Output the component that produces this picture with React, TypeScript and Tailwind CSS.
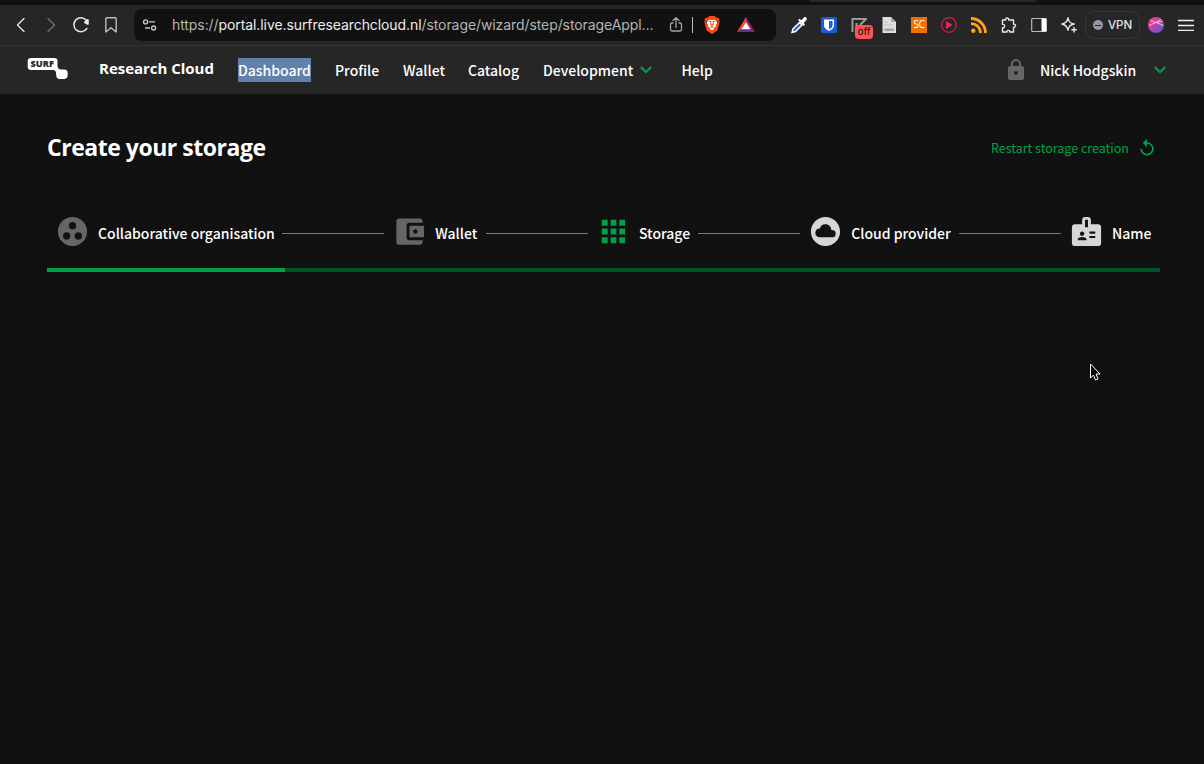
import React from "react";
import { MdGroupWork, MdAccountBalanceWallet, MdApps, MdCloudCircle, MdBadge, MdReplay, MdLock } from "react-icons/md";
import { SiBrave } from "react-icons/si";

const sans = "font-['Noto_Sans_CJK_JP',sans-serif] font-medium";

function Cell({ children }: { children: React.ReactNode }) {
  return <div className="flex h-8 w-[30px] shrink-0 items-center justify-center">{children}</div>;
}

function Stroke({ d, size = "size-5", color = "stroke-[#e6e6e6]" }: { d: string; size?: string; color?: string }) {
  return (
    <svg viewBox="0 0 20 20" className={`${size} ${color} shrink-0 fill-none stroke-[1.4]`} strokeLinecap="round" strokeLinejoin="round">
      <path d={d} />
    </svg>
  );
}

function Chevron() {
  return (
    <svg viewBox="0 0 12 8" className="h-2 w-3 shrink-0 fill-none stroke-[#00a14b] stroke-2">
      <path d="M.8 1 6 6.2 11.2 1" />
    </svg>
  );
}

function AddressBar() {
  return (
    <div className="flex h-8 w-[642px] shrink-0 items-center rounded-lg bg-[#111111] pl-1.5">
      <svg viewBox="0 0 20 20" className="size-5 shrink-0 fill-none stroke-[#c8c8c8] stroke-[1.4]">
        <circle cx="5.6" cy="6.9" r="2" />
        <path d="M9 6.9h6M5 13h5" />
        <circle cx="13.6" cy="13" r="2" />
      </svg>
      <span className="mb-0.5 ml-3 w-[482px] shrink-0 whitespace-nowrap font-['Inter',sans-serif] text-[14px] tracking-[-0.085px] text-[#b4b4b4]">
        https://<span className="text-[#ededed]">portal.live.surfresearchcloud.nl</span>/storage/wizard/step/storageAppl...
      </span>
      <svg viewBox="0 0 20 20" className="ml-3 size-5 shrink-0 fill-none stroke-[#a5a5a5] stroke-[1.3]" strokeLinecap="round" strokeLinejoin="round">
        <path d="M7 8H6a1.500 1.500 0 0 0-1.500 1.500v5A1.500 1.500 0 0 0 6 16h8a1.500 1.500 0 0 0 1.500-1.500v-5A1.500 1.500 0 0 0 14 8h-1M10 12.500V2.800M7 5.500l3-2.900 3 2.900" />
      </svg>
      <div className="ml-1.5 h-4 w-px shrink-0 bg-[#bdbdbd]" />
      <span className="relative ml-2.5 size-[18px] shrink-0">
        <svg viewBox="0 0 18 18" className="absolute inset-0 size-[18px] fill-white"><path d="M5 3.500h8l1.500 4-2 5L9 15.500l-3.500-3-2-5z" /></svg>
        <SiBrave className="absolute inset-0 size-[18px] text-[#ff4a0b]" />
      </span>
      <svg viewBox="0 0 20 18" className="ml-[15px] h-[18px] w-5 shrink-0">
        <path d="M10 1 1 16l4.500-2.500L10 6z" fill="#ff4a20" />
        <path d="m10 1 9 15-4.500-2.500L10 6z" fill="#9e1f63" />
        <path d="M1 16h18l-4.500-3h-9z" fill="#662d91" />
        <path d="m10 6 4.500 7.300h-9z" fill="#fff" />
      </svg>
    </div>
  );
}

function Extensions() {
  return (
    <div className="ml-2 flex items-center">
      <Cell>
        <svg viewBox="0 0 18 18" className="size-[18px]">
          <path d="M2 16.500 3 13l6.500-6.500 2.500 2.500-6.500 6.500z" fill="#3157c9" stroke="#fff" strokeWidth="1.500" />
          <path d="m8 4 1.500-1.200 1.700 1.500L14 1.500c1.500-1.300 3.700.8 2.500 2.500L13.700 7l1.300 1.500L13.800 10z" fill="#fff" />
        </svg>
      </Cell>
      <Cell>
        <svg viewBox="0 0 16 16" className="size-4">
          <rect width="16" height="16" rx="2" fill="#175ddc" />
          <path d="M3 2.500h10v5.700c0 3-2.600 4.700-5 5.800-2.400-1.100-5-2.800-5-5.800z" fill="#fff" />
          <path d="M8 4h3.500v4.200c0 1.900-1.700 3.200-3.500 4.100z" fill="#175ddc" />
        </svg>
      </Cell>
      <Cell>
        <div className="relative size-4">
          <svg viewBox="0 0 16 16" className="size-4 fill-none stroke-[#999999] stroke-2">
            <path d="M1.500 15V2H15L9 8M5.500 6v6" />
          </svg>
          <span className="absolute top-2 left-1 flex h-3.5 w-[18px] items-center justify-center rounded-[4px] bg-[#ff5650] pb-0.5 font-['Inter',sans-serif] text-[10px] font-medium text-[#222222]">off</span>
        </div>
      </Cell>
      <Cell>
        <svg viewBox="0 0 16 16" className="size-4">
          <path d="M1.500 0H10l5 5v11H1.500z" fill="#dedede" />
          <path d="M10 0v5h5z" fill="#a8a8a8" />
          <path d="M3 5h4M3 8h9" stroke="#c0c0c0" />
          <path d="M3.500 11.500H13V14H3.500z" fill="#a3a3a3" />
        </svg>
      </Cell>
      <Cell>
        <div className="flex size-4 items-center justify-center bg-[#ed7203] font-['Open_Sans',sans-serif] text-[10.500px] tracking-[-0.4px] text-white">SC</div>
      </Cell>
      <Cell>
        <svg viewBox="0 0 16 16" className="size-4">
          <circle cx="8" cy="8" r="7.300" fill="none" stroke="#c5214d" strokeWidth="1.300" />
          <path d="M5 4v8l6.500-4z" fill="#ed2553" />
        </svg>
      </Cell>
      <Cell>
        <svg viewBox="0 0 16 16" className="size-4 fill-none stroke-[#ffa31c] stroke-[2.8]">
          <circle cx="2.300" cy="13.700" r="2.200" className="fill-[#ffa31c] stroke-none" />
          <path d="M0 6.600A9.400 9.400 0 0 1 9.400 16M0 1.500A14.500 14.500 0 0 1 14.500 16" />
        </svg>
      </Cell>
      <Cell>
        <Stroke d="M3.500 5h3.200c-.8-2.700 3.800-2.700 3 0h4.800v4.200c2.700-.8 2.700 3.600 0 2.900V17h-3.800c.5-2.200-3.200-2.200-2.700 0H3.500v-4.200c2.800.6 2.800-4 0-3.400z" />
      </Cell>
      <Cell>
        <svg viewBox="0 0 16 16" className="size-4">
          <rect x=".7" y="1.500" width="14.500" height="13" rx="1" fill="none" stroke="#b8b8bc" strokeWidth="1.200" />
          <path d="M10.500 1.500h5v13h-5z" fill="#fff" />
        </svg>
      </Cell>
      <Cell>
        <Stroke d="M9 2.800c.7 4 2 5.500 6.200 6.200-4.200.8-5.500 2.200-6.200 6.200-.8-4-2.200-5.400-6.200-6.200C6.800 8.300 8.200 6.800 9 2.800zM15 12.500v4.500M12.800 14.700h4.500" />
      </Cell>
      <div className="ml-px flex h-7 w-[55px] items-center justify-center gap-[5px] rounded-[9px] border border-[#363636] font-['Inter',sans-serif] text-[11.500px] font-medium text-[#e3e3e3]">
        <span className="flex size-2.5 items-center justify-center rounded-full bg-[#9296a5]"><span className="h-px w-1.5 bg-[#262626]" /></span>
        <span className="mt-px">VPN</span>
      </div>
      <svg viewBox="0 0 16 16" className="ml-2 size-4">
        <defs>
          <linearGradient id="avatar" x1="0" y1="0" x2="1" y2="1">
            <stop offset=".2" stopColor="#ed3a8b" />
            <stop offset="1" stopColor="#4f5bdc" />
          </linearGradient>
        </defs>
        <circle cx="8" cy="8" r="8" fill="url(#avatar)" />
        <path d="M2.500 3.500 8 5.500l6.500-1.300M.8 8.500 8 5.500l5-3.500M8 5.500l7.500 3" fill="none" stroke="#f3bfe6" strokeWidth="1" />
      </svg>
      <svg viewBox="0 0 16 12" className="ml-3.5 h-3 w-4 stroke-[#eeeeee] stroke-[1.3]">
        <path d="M0 1.500h16M0 6.500h16M0 11.300h16" />
      </svg>
    </div>
  );
}

function BrowserChrome() {
  return (
    <div className="h-[46px]">
      <div className="h-[5px] bg-[#111111] pl-[809px]">
        <div className="h-0.5 w-[228px] rounded-b bg-[#262626]" />
      </div>
      <div className="flex h-[41px] items-center border-b border-[#333333] bg-[#262626] pl-1.5">
        <Cell><Stroke d="m13 3.500-6.500 6.500 6.500 6.500" /></Cell>
        <Cell><Stroke d="m7 3.500 6.500 6.500-6.500 6.500" color="stroke-[#707070]" /></Cell>
        <Cell>
          <svg viewBox="0 0 20 20" className="size-5 fill-none stroke-[#e8e8e8] stroke-[1.5]">
            <path d="M15.800 13.500A7 7 0 1 1 15.500 5.500" strokeLinecap="round" />
            <path d="M17.800 4.500v4.300a1 1 0 0 1-1.300 1l-3-1.500a1 1 0 0 1-.2-1.500l2.800-2.900z" className="fill-[#e8e8e8] stroke-none" />
          </svg>
        </Cell>
        <Cell><Stroke d="M6 2.800h8.200c.7 0 1 .3 1 1V17L10 12.700 4.800 17V3.800c0-.7.400-1 1.200-1z" color="stroke-[#bcbcc4]" /></Cell>
        <div className="ml-2"><AddressBar /></div>
        <Extensions />
      </div>
    </div>
  );
}

function SurfLogo() {
  return (
    <svg viewBox="0 0 42 23" className="mb-[3px] h-[23px] w-[42px] shrink-0">
      <path d="M4 1h23.500c2 0 3 1 3 3v5c0 2.500 1.800 3.500 4 3.500h2.500c2.600 0 3.700 1.300 3.700 3.500v2c0 2.600-1.500 4-4 4h-3.200c-3.500 0-4.300-2-4.300-4.500 0-2.500-.7-4.500-3.200-4.500H4c-2 0-3.300-1-3.300-3V4C.7 2 2 1 4 1z" fill="#fff" />
      <text x="3.500" y="9.800" textLength="23.500" lengthAdjust="spacingAndGlyphs" fontFamily="Open Sans, sans-serif" fontWeight="800" fontSize="8" fill="#262626">SURF</text>
    </svg>
  );
}

function Header() {
  return (
    <header className={`flex h-12 items-center bg-[#262626] pr-[38px] pl-[27px] text-[14px] whitespace-nowrap text-white ${sans}`}>
      <SurfLogo />
      <span className="mr-6 mb-[3px] ml-[30px] w-[115px] font-['Open_Sans',sans-serif] text-[15px] font-bold tracking-[-0.02px]">Research Cloud</span>
      <nav className="flex items-center gap-6">
        <span className="h-6 w-[73px] bg-[#6081aa] leading-6">Dashboard</span>
        <span className="w-11">Profile</span>
        <span className="w-[41px]">Wallet</span>
        <span className="w-[51px]">Catalog</span>
        <span className="flex w-[114.5px] items-center"><span className="w-[97px]">Development</span><Chevron /></span>
        <span>Help</span>
      </nav>
      <MdLock className="ml-auto size-6 text-[#666666]" />
      <span className="ml-3 w-24">Nick Hodgskin</span>
      <span className="ml-[18px] flex"><Chevron /></span>
    </header>
  );
}

const steps = [
  { label: "Collaborative organisation", width: "w-[176px]", Icon: MdGroupWork, color: "text-[#666666]" },
  { label: "Wallet", width: "w-[42.5px]", Icon: MdAccountBalanceWallet, color: "text-[#666666]" },
  { label: "Storage", width: "w-[51px]", Icon: MdApps, color: "text-[#00a14b]" },
  { label: "Cloud provider", width: "w-[99.5px]", Icon: MdCloudCircle, color: "text-[#d6d6d6]" },
  { label: "Name", width: "w-[40px]", Icon: MdBadge, color: "text-[#d6d6d6]" },
];

function Stepper() {
  return (
    <div className="mt-[38px] flex h-[54px] items-center gap-2 px-2">
      {steps.map(({ label, width, Icon, color }, i) => (
        <React.Fragment key={label}>
          {i > 0 && <div className="mt-1 h-px flex-1 bg-[#777777]" />}
          <Icon className={`size-[35px] shrink-0 ${color}`} />
          <span className={`mt-1 shrink-0 text-[14px] tracking-[-0.01px] whitespace-nowrap text-white ${width} ${sans}`}>{label}</span>
        </React.Fragment>
      ))}
    </div>
  );
}

export default function App() {
  return (
    <div className="relative h-[764px] w-[1204px] overflow-hidden bg-[#111111]">
      <BrowserChrome />
      <Header />
      <main className="pt-9 pr-11 pl-[47px]">
        <div className="flex h-9 items-center justify-between">
          <h1 className="mb-0.5 font-['Open_Sans',sans-serif] text-[23px] font-bold tracking-[-0.47px] whitespace-nowrap text-white">Create your storage</h1>
          <div className="mr-[3px] flex items-center text-[#00a14b]">
            <span className="w-[146px] font-['Noto_Sans_CJK_JP',sans-serif] text-[12.500px] whitespace-nowrap">Restart storage creation</span>
            <MdReplay className="size-5" />
          </div>
        </div>
        <Stepper />
        <div className="mt-[10px] h-1 bg-[#005226]"><div className="h-1 w-[238px] bg-[#00a14b]" /></div>
      </main>
      <svg viewBox="0 0 12 19" className="absolute top-[363px] left-[1089px] h-[19px] w-3 fill-black stroke-white stroke-1">
        <path d="M1.500 1v14l3-3 2 5 2.500-1-2-5H11z" />
      </svg>
    </div>
  );
}
